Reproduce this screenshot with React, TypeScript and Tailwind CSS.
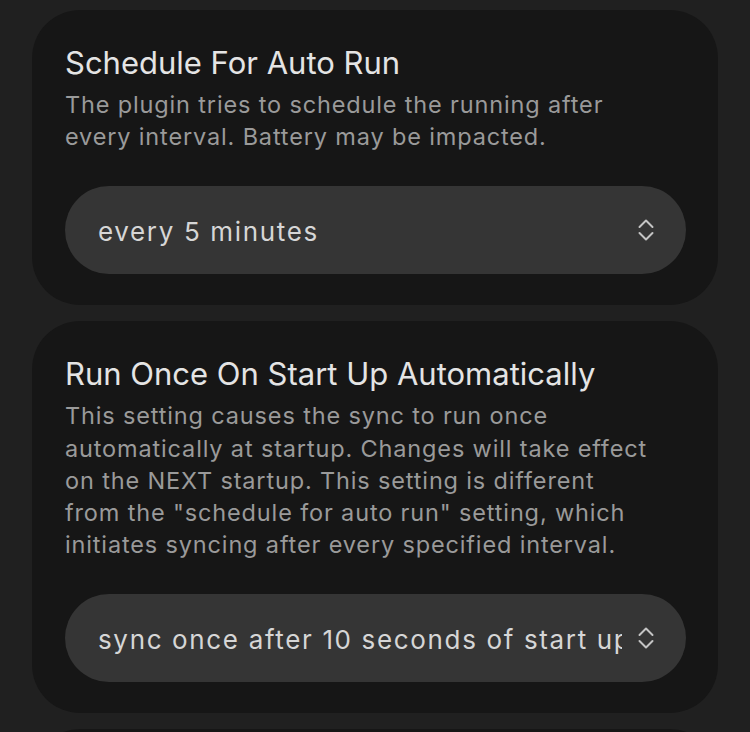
import * as React from "react"

function UpDownIcon() {
  return (
    <svg width="16" height="24" viewBox="0 0 16 24" fill="none" className="shrink-0">
      <path d="M1.5 9 L8 2.5 L14.5 9" stroke="#c4c4c4" strokeWidth="2" strokeLinecap="round" strokeLinejoin="round" />
      <path d="M1.5 15 L8 21.5 L14.5 15" stroke="#c4c4c4" strokeWidth="2" strokeLinecap="round" strokeLinejoin="round" />
    </svg>
  )
}

// pill-shaped picker; long values are clipped like the native control
function SelectPill({ value }: { value: string }) {
  return (
    <div className="flex h-[88px] items-center rounded-full bg-[#353535] pl-[33px] pr-[32px]">
      <div className="mr-[16px] flex-1 overflow-hidden whitespace-nowrap pt-[4px] text-[26px] leading-[34px] tracking-[1.65px] text-[#d6d6d6]">
        {value}
      </div>
      <UpDownIcon />
    </div>
  )
}

function SettingCard({ title, lines, value }: { title: string; lines: string[]; value: string }) {
  return (
    <div className="rounded-[48px] bg-[#161616] pl-[33px] pr-[32px] pt-[34px] pb-[31px]">
      <div className="text-[31px] leading-[38px] text-[#e4e4e4]">{title}</div>
      <div className="mt-[7px] text-[23.5px] leading-[32.2px] tracking-[0.85px] text-[#9a9a9a]">
        {lines.map((line) => (
          <div key={line} className="whitespace-nowrap">{line}</div>
        ))}
      </div>
      <div className="mt-[32.5px]">
        <SelectPill value={value} />
      </div>
    </div>
  )
}

export default function App() {
  return (
    <div className="h-[732px] overflow-hidden bg-[#202020] px-[32px] pt-[10px] font-['Inter','Noto_Sans',sans-serif]">
      <div className="flex flex-col gap-[16.5px]">
        <SettingCard
          title="Schedule For Auto Run"
          lines={["The plugin tries to schedule the running after", "every interval. Battery may be impacted."]}
          value="every 5 minutes"
        />
        <SettingCard
          title="Run Once On Start Up Automatically"
          lines={[
            "This setting causes the sync to run once",
            "automatically at startup. Changes will take effect",
            "on the NEXT startup. This setting is different",
            'from the "schedule for auto run" setting, which',
            "initiates syncing after every specified interval.",
          ]}
          value="sync once after 10 seconds of start up"
        />
        <div className="h-[120px] rounded-[48px] bg-[#161616]" />
      </div>
    </div>
  )
}
